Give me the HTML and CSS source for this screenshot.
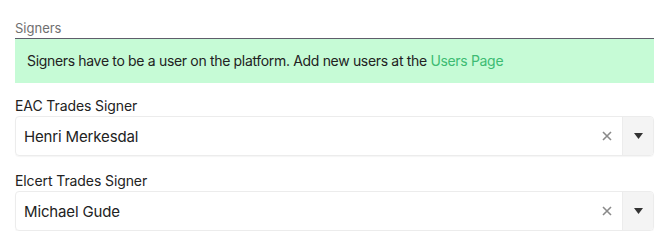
FILE: index.html
```html
<!DOCTYPE html>
<html lang="en">
<head>
    <meta charset="UTF-8">
    <meta name="viewport" content="width=device-width, initial-scale=1.0">
    <title>Signers</title>
    <link rel="stylesheet" href="styles.css">
</head>
<body>
    <div class="section">
        <h3 class="section-title">Signers</h3>
        <div class="notice">
            Signers have to be a user on the platform. Add new users at the <a href="#" class="notice-link">Users Page</a>
        </div>

        <div class="field field-first">
            <label class="field-label">EAC Trades Signer</label>
            <div class="select">
                <div class="select-value">Henri Merkesdal</div>
                <span class="select-clear">
                    <svg width="10" height="10" viewBox="0 0 10 10"><path d="M1 1l8 8M9 1l-8 8" stroke="#8a8a8a" stroke-width="1.6"/></svg>
                </span>
                <div class="select-toggle">
                    <svg width="9" height="6" viewBox="0 0 9 6"><path d="M0 0h9L4.5 6z" fill="#333"/></svg>
                </div>
            </div>
        </div>

        <div class="field">
            <label class="field-label">Elcert Trades Signer</label>
            <div class="select">
                <div class="select-value">Michael Gude</div>
                <span class="select-clear">
                    <svg width="10" height="10" viewBox="0 0 10 10"><path d="M1 1l8 8M9 1l-8 8" stroke="#8a8a8a" stroke-width="1.6"/></svg>
                </span>
                <div class="select-toggle">
                    <svg width="9" height="6" viewBox="0 0 9 6"><path d="M0 0h9L4.5 6z" fill="#333"/></svg>
                </div>
            </div>
        </div>
    </div>
</body>
</html>
```

FILE: styles.css
```css
:root {
    --text-color: #222222;
    --muted-color: #6f6f6f;
    --notice-bg: #c6fbd6;
    --link-color: #3dbb73;
    --border-color: #ececec;
}

body, html {
    margin: 0;
    padding: 0;
    background: #ffffff;
    font-family: 'Inter', 'Liberation Sans', sans-serif;
    color: var(--text-color);
}

.section {
    width: 639px;
    padding: 18px 0 0 15px;
}

.section-title {
    margin: 0;
    font-size: 13px;
    font-weight: 400;
    line-height: 20px;
    color: var(--muted-color);
    border-bottom: 1px solid #5f5d6b;
}

.notice {
    background-color: var(--notice-bg);
    padding: 12px 12px;
    font-size: 14px;
    line-height: 20px;
    letter-spacing: -0.33px;
}

.notice-link {
    color: var(--link-color);
    text-decoration: none;
}

.field {
    margin-top: 15px;
}

.field-first {
    margin-top: 13px;
}

.field-label {
    display: block;
    font-size: 14px;
    line-height: 20px;
    letter-spacing: -0.1px;
}

.select {
    display: flex;
    align-items: center;
    height: 38px;
    border: 1px solid var(--border-color);
    border-radius: 4px;
    box-shadow: 0 1px 1px rgba(0, 0, 0, 0.04);
    overflow: hidden;
}

.select-value {
    flex: 1;
    padding-left: 8px;
    font-size: 15px;
    letter-spacing: -0.15px;
}

.select-clear {
    display: flex;
    justify-content: center;
    width: 30px;
}

.select-toggle {
    display: flex;
    align-items: center;
    justify-content: center;
    width: 30px;
    height: 100%;
    background-color: #f4f4f4;
    border-left: 1px solid var(--border-color);
}
```
